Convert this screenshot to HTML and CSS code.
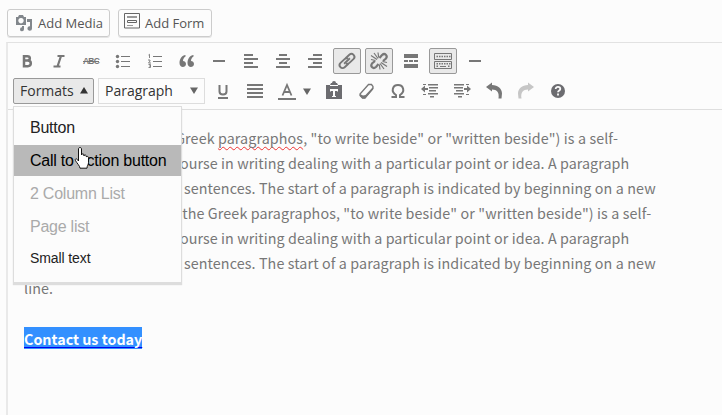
FILE: index.html
```html
<!DOCTYPE html>
<html lang="en">
<head>
<meta charset="utf-8">
<title>Editor</title>
<link rel="stylesheet" href="styles.css">
</head>
<body>
<div class="media-bar">
  <button class="media-btn"><svg width="18" height="18" viewBox="0 0 18 18"><path fill="#82878c" fill-rule="evenodd" d="M1 3h2l1-2h4l1 2h2v8H1zM6 4a2.700 2.700 0 1 0 .01 0z"/><path fill="#82878c" d="M12 5h5v9.500a2.300 2.300 0 1 1-2-2.300V8h-3zM7 12h2v3a2 2 0 1 1-2-1.700z"/></svg><span class="media-label">Add Media</span></button>
  <button class="media-btn form-btn"><svg width="16" height="16" viewBox="0 0 16 16"><path fill="none" stroke="#666" d="M.5.5h15v14.500H.5zM3.500 7.500h9v2h-9z"/><path fill="#999" d="M3 3h10v2H3zM3 12h6v1H3z"/></svg><span class="media-label">Add Form</span></button>
</div>
<div class="editor">
  <div class="toolbar">
    <div class="row">
      <button class="tool"><svg viewBox="0 0 20 20"><path fill="none" stroke="#777" stroke-width="2.500" d="M7 5.200h3.300c3.400 0 3.400 4.300 0 4.300H7h3.800c4 0 4 5.700 0 5.700H7zM7 4v12.400"/></svg></button>
      <button class="tool"><svg viewBox="0 0 20 20"><path fill="none" stroke="#777" stroke-width="2.200" d="M8.500 5h7M4.500 15.500h7M12 5L8.500 15.500"/></svg></button>
      <button class="tool"><span class="abc">ABC</span></button>
      <button class="tool"><svg viewBox="0 0 20 20"><circle cx="4.500" cy="5.500" r="1.700" fill="#777"/><circle cx="4.500" cy="10.500" r="1.700" fill="#777"/><circle cx="4.500" cy="15.500" r="1.700" fill="#777"/><path fill="#777" d="M8 5h9v1H8zM8 10h9v1H8zM8 15h9v1H8z"/></svg></button>
      <button class="tool"><svg viewBox="0 0 20 20"><path fill="#777" d="M8 5h9v1H8zM8 10h9v1H8zM8 15h9v1H8z"/><path fill="none" stroke="#777" stroke-width=".9" d="M3.500 4l1-.7V7M3 9h2v1L3.500 12H6M3.500 13.500h2v3h-2M4 15h1.500"/></svg></button>
      <button class="tool"><svg viewBox="0 0 20 20"><path fill="#777" d="M8.500 4C5 4 2.500 8 2.500 12c0 5.500 6.500 5 6.500 1 0-2-1.500-3-3-3 0-2 1-3.500 2.500-4.500zM16.500 4c-3.500 0-6 4-6 8 0 5.500 6.500 5 6.500 1 0-2-1.500-3-3-3 0-2 1-3.500 2.500-4.500z"/></svg></button>
      <button class="tool"><svg viewBox="0 0 20 20"><path fill="#777" d="M4 9h12v2H4z"/></svg></button>
      <button class="tool"><svg viewBox="0 0 20 20"><path fill="#777" d="M3 3h9v2H3zM3 7h14v2H3zM3 11h9v2H3zM3 15h14v2H3z"/></svg></button>
      <button class="tool"><svg viewBox="0 0 20 20"><path fill="#777" d="M6 3h8v2H6zM3 7h14v2H3zM6 11h8v2H6zM3 15h14v2H3z"/></svg></button>
      <button class="tool"><svg viewBox="0 0 20 20"><path fill="#777" d="M8 3h9v2H8zM3 7h14v2H3zM8 11h9v2H8zM3 15h14v2H3z"/></svg></button>
      <button class="tool active"><svg viewBox="0 0 20 20"><g fill="none" stroke="#777" stroke-width="1.900" transform="rotate(-43 10 10)"><path d="M9.500 13H4a3 3 0 0 1 0-6h5.500a3 3 0 0 1 2.800 2M10.500 7H16a3 3 0 0 1 0 6h-5.500a3 3 0 0 1-2.800-2"/><path d="M6 10h8"/></g></svg></button>
      <button class="tool active"><svg viewBox="0 0 20 20"><g fill="none" stroke="#777"><path stroke-width="2.200" d="M10.500 7L13 4c3-2.500 6 .5 4 3.500L14 10M9.500 13L7 16c-3 2.500-6-.5-4-3.500L6 10"/><path stroke-width="1.200" d="M2 4.500l6 4M5 2l4 5.500M9 1.500l.7 5M2 8.500l4.500 1M18 15.500l-6-4M15 18l-4-5.500M11 18.500l-.7-5M18 11.500l-4.500-1"/></g></svg></button>
      <button class="tool"><svg viewBox="0 0 20 20"><path fill="#777" d="M3 3h14v4H3zM3 9h4v2H3zM8 9h4v2H8zM13 9h4v2h-4zM3 13h14v4H3z"/></svg></button>
      <button class="tool active"><svg viewBox="0 0 20 20"><path fill="none" stroke="#777" d="M1.500 2.500h17v6h-17zM1.500 10.500h17v7h-17z"/><path fill="none" stroke="#777" stroke-width="1.500" stroke-dasharray="1.500 1" d="M3.500 5.500h14M3.500 12.700h14M3.500 15.300h2M15 15.300h2"/><path stroke="#777" d="M7 15.500h6"/></svg></button>
      <button class="tool"><svg viewBox="0 0 20 20"><path fill="#777" d="M4 9h12v2H4z"/></svg></button>
    </div>
    <div class="row">
      <button class="select formats">Formats<svg width="8" height="7" viewBox="0 0 8 7"><path fill="#333" d="M0 6.500L4 0l4 6.500z"/></svg></button>
      <button class="select paragraph">Paragraph<svg width="8" height="7" viewBox="0 0 8 7"><path fill="#666" d="M0 .5L4 7 8 .5z"/></svg></button>
      <button class="tool"><svg viewBox="0 0 20 20"><path fill="none" stroke="#777" stroke-width="2" d="M6.500 4v6.500c0 4 7 4 7 0V4M5 17h10"/></svg></button>
      <button class="tool"><svg viewBox="0 0 20 20"><path fill="#777" d="M2 3h16v2H2zM2 7h16v2H2zM2 11h16v2H2zM2 15h16v2H2z"/></svg></button>
      <button class="tool color"><svg viewBox="0 0 20 20"><path fill="none" stroke="#777" stroke-width="1.800" d="M5.500 14.500L10 4l4.500 10.500M7 11h6"/><path fill="#777" d="M1 17h18v2H1z"/></svg><svg class="caret" viewBox="0 0 8 7"><path fill="#666" d="M0 .5L4 7 8 .5z"/></svg></button>
      <button class="tool"><svg viewBox="0 0 20 20"><path fill="#6c6c70" d="M2 4h4l1-2h1a2 2 0 0 1 4 0h1l1 2h4v14H2z"/><path fill="#fcfcfc" d="M6 4h8v1H6zM6 8h8v2.500h-1V10h-2v5h1v1H8v-1h1v-5H7v.5H6z"/></svg></button>
      <button class="tool"><svg viewBox="0 0 20 20"><path fill="none" stroke="#777" stroke-width="1.300" d="M12.500 3.500h3l1.500 2v2L9 17H6.500L4 14.500V13z"/><path fill="#777" d="M4 13l3 1.500L9.500 14 17 6v2.500L9 17.500H6.500L4 15z"/></svg></button>
      <button class="tool"><svg viewBox="0 0 20 20"><path fill="none" stroke="#777" stroke-width="2" d="M3.500 16H8v-2C2.500 10.500 4.500 4 10 4s7.500 6.500 2 10v2h4.500"/></svg></button>
      <button class="tool"><svg viewBox="0 0 20 20"><path fill="#777" d="M3 3h3v1H3zM8 3h10v1.500H8zM9 6h9v1.500H9zM9 9h7v1.500H9zM3 13h3v1H3zM8 12h10v1.500H8zM10 15h4v1.500h-4zM1 8l4-3.500V7h3v2H5v2.500z"/></svg></button>
      <button class="tool"><svg viewBox="0 0 20 20"><path fill="#777" d="M14 3h3v1h-3zM2 3h10v1.500H2zM2 6h9v1.500H2zM4 9h7v1.500H4zM14 13h3v1h-3zM2 12h10v1.500H2zM6 15h4v1.500H6zM19 8l-4-3.500V7h-3v2h3v2.500z"/></svg></button>
      <button class="tool"><svg viewBox="0 0 20 20"><path fill="#777" d="M2 6l6-4.500V4c6 0 10 4 10 8.500l-.5 5h-3c1-6-1.500-9-6.500-9v2z"/></svg></button>
      <button class="tool"><svg viewBox="0 0 20 20"><path fill="#c6c6c6" d="M18 6l-6-4.500V4C6 4 2 8 2 12.500l.5 5h3c-1-6 1.500-9 6.500-9v2z"/></svg></button>
      <button class="tool"><svg viewBox="0 0 20 20"><circle cx="10" cy="10" r="7" fill="#6c6c70"/><path fill="none" stroke="#fcfcfc" stroke-width="1.800" d="M7.700 8c0-3 4.600-2.500 4.600 0 0 1.500-2.300 1.500-2.300 3.300M10 12.500v2"/></svg></button>
    </div>
  </div>
  <div class="content">
    <div class="line first">A paragraph (from the Greek <span class="misspelt">paragraphos</span>, "to write beside" or "written beside") is a self-</div>
    <div class="line even">contained unit of a discourse in writing dealing with a particular point or idea. A paragraph</div>
    <div class="line">consists of one or more sentences. The start of a paragraph is indicated by beginning on a new</div>
    <div class="line fourth">line. A paragraph (from the Greek paragraphos, "to write beside" or "written beside") is a self-</div>
    <div class="line even">contained unit of a discourse in writing dealing with a particular point or idea. A paragraph</div>
    <div class="line">consists of one or more sentences. The start of a paragraph is indicated by beginning on a new</div>
    <div class="line">line.</div>
    <div class="contact"><span class="selected">Contact us today</span></div>
  </div>
</div>
<div class="menu">
  <div class="item">Button</div>
  <div class="item hover">Call to action button</div>
  <div class="item muted">2 Column List</div>
  <div class="item muted">Page list</div>
  <div class="item small">Small text</div>
</div>
<svg class="cursor" viewBox="0 0 15 22"><path fill="#fff" stroke="#111" d="M4.500 14V2c0-2 3-2 3 0v6c0-1.500 2.500-1.500 2.500 0v1c0-1.500 2.300-1.300 2.300.3v.7c.2-1 2.200-.8 2.200.7v5c0 2-1.500 3-1.500 5.500H6c0-2-3-5-4.500-7.500-1-2 1-2.500 2-1z"/></svg>
</body>
</html>
```
FILE: styles.css
```css
* { box-sizing: border-box; }
body {
  margin: 0;
  height: 415px;
  overflow: hidden;
  background: #fcfcfc;
  font-family: "Open Sans", sans-serif;
}
button {
  margin: 0;
  padding: 0;
  border: 1px solid transparent;
  background: none;
  font: inherit;
}
.media-bar {
  display: flex;
  gap: 8px;
  height: 42px;
  padding: 9px 0 0 7px;
}
.media-btn {
  display: flex;
  align-items: center;
  width: 103px;
  height: 28px;
  padding-left: 7px;
  gap: 5px;
  border: 1px solid #ccc;
  border-radius: 3px;
  box-shadow: 0 1px 0 #e4e4e4;
  font-size: 13px;
  color: #555;
  white-space: nowrap;
}
.media-btn svg { flex: none; }
.form-btn { width: 94px; padding-left: 5px; }
.form-btn svg { margin-top: -4px; }
.editor {
  height: 373px;
  margin-left: 6px;
  border-top: 1px solid #e2e2e2;
  border-left: 2px solid #e9e9e9;
}
.toolbar {
  height: 67px;
  padding: 5px 0 0 5px;
  border-bottom: 1px solid #dedede;
}
.row { display: flex; gap: 4px; height: 30px; }
.tool {
  display: flex;
  align-items: center;
  justify-content: center;
  flex: none;
  width: 28px;
  height: 26px;
}
.tool svg { width: 20px; height: 20px; flex: none; }
.tool.active { background: #e9e9e9; border-color: #999; border-radius: 2px; }
.abc { font: bold 8.5px "Liberation Sans", sans-serif; color: #777; text-decoration: line-through; letter-spacing: -0.8px; }
.color { width: 43px; justify-content: flex-start; padding-left: 3px; gap: 6px; }
.tool .caret { width: 8px; height: 7px; }
.select {
  display: flex;
  align-items: center;
  justify-content: space-between;
  height: 26px;
  padding: 0 5px 1px 6px;
  border: 1px solid #ddd;
  font-size: 14px;
  color: #333;
}
.formats { width: 81px; background: #e9e9e9; border-color: #999; border-radius: 2px; }
.paragraph { width: 107px; padding-right: 6px; }
.content {
  padding: 15px 0 0 16px;
  font-family: "Noto Sans CJK SC", sans-serif;
  font-size: 14.3px;
  color: #777;
}
.line { height: 25px; line-height: 25px; white-space: pre; letter-spacing: 0.107px; }
.first { letter-spacing: 0.1px; }
.even { letter-spacing: 0.075px; }
.fourth { letter-spacing: 0.11px; }
.misspelt { text-decoration: underline wavy #e33 1px; text-underline-offset: 2px; text-decoration-skip-ink: none; }
.contact { display: flex; padding-top: 27px; }
.selected {
  height: 22px;
  line-height: 24px;
  background: #3390ff;
  color: #fff;
  font-weight: 700;
  text-decoration: underline #00e 1px;
  text-underline-offset: 2px;
  text-decoration-skip-ink: none;
}
.menu {
  position: absolute;
  left: 13px;
  top: 106px;
  width: 169px;
  height: 177px;
  padding-top: 5px;
  border: 1px solid #ddd;
  background: #fcfcfc;
  box-shadow: 0 2px 1px #ddd;
  font-family: "Liberation Sans", sans-serif;
  font-size: 16px;
  letter-spacing: -0.24px;
  color: #222;
}
.item { height: 33px; line-height: 31px; padding-left: 16px; white-space: nowrap; }
.hover { height: 31px; margin: 0 0 1px; background: #b9b9b9; color: #000; }
.muted { color: #aaa; line-height: 33px; }
.small { font-size: 14px; line-height: 31px; letter-spacing: -0.1px; }
.cursor { position: absolute; left: 74px; top: 147px; width: 15px; height: 22px; }
```
